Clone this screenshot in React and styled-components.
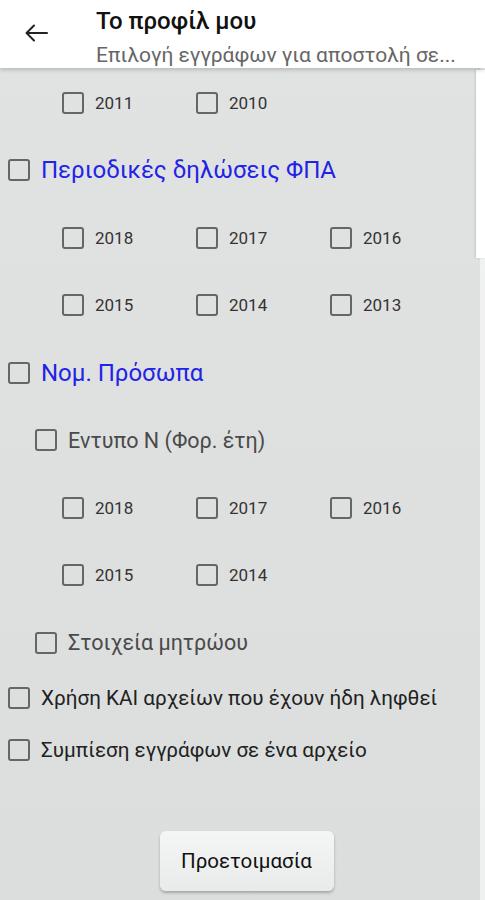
import React from "react";
import styled, { createGlobalStyle } from "styled-components";

const GlobalStyle = createGlobalStyle`
  body {
    margin: 0;
    font-family: Roboto, "Noto Sans", sans-serif;
    background: #e0e2e2;
  }
`;

const sections = [
  { type: "years", years: ["2011", "2010"] },
  { type: "group", label: "Περιοδικές δηλώσεις ΦΠΑ" },
  { type: "years", years: ["2018", "2017", "2016"] },
  { type: "years", years: ["2015", "2014", "2013"] },
  { type: "group", label: "Νομ. Πρόσωπα" },
  { type: "sub", label: "Εντυπο Ν (Φορ. έτη)" },
  { type: "years", years: ["2018", "2017", "2016"] },
  { type: "years", years: ["2015", "2014"] },
  { type: "sub", label: "Στοιχεία μητρώου" },
];

const options = [
  "Χρήση ΚΑΙ αρχείων που έχουν ήδη ληφθεί",
  "Συμπίεση εγγράφων σε ένα αρχείο",
];

/* =========================
   Styled Components
========================= */

const Page = styled.div`
  position: relative;
  height: 900px;
  overflow: hidden;
  background: linear-gradient(#e1e3e3, #dcdede);
`;

const Header = styled.header`
  position: relative;
  z-index: 2;
  height: 68px;
  display: flex;
  background: #ffffff;
  box-shadow: 0 2px 4px rgba(0, 0, 0, 0.18);
`;

const BackButton = styled.div`
  width: 72px;
  display: flex;
  align-items: center;
  justify-content: center;
  color: #222;
  padding-bottom: 2px;
`;

const Titles = styled.div`
  margin-left: 24px;
  padding-top: 6px;
  display: flex;
  flex-direction: column;
  min-width: 0;
`;

const Title = styled.div`
  font-size: 24px;
  line-height: 30px;
  font-weight: 500;
  color: #111;
`;

const Subtitle = styled.div`
  margin-top: 7px;
  font-size: 21px;
  line-height: 24px;
  color: #666;
  white-space: nowrap;
`;

const Content = styled.div`
  padding: 1px 0 0 8px;
`;

const Row = styled.div`
  height: 67.5px;
  display: flex;
  align-items: center;
  padding-left: ${(p) => p.$indent || 0}px;
`;

const Item = styled.label`
  display: flex;
  align-items: center;
  width: ${(p) => (p.$width ? `${p.$width}px` : "auto")};
`;

const Box = styled.span`
  box-sizing: border-box;
  width: 22px;
  height: 22px;
  flex: none;
  border: 2px solid #666;
  border-radius: 3px;
  margin-right: 11px;
`;

const YearText = styled.span`
  font-size: 17px;
  color: #333;
`;

const GroupText = styled.span`
  font-size: 24px;
  color: #2323e6;
`;

const SubText = styled.span`
  font-size: 21.5px;
  color: #4a4a4a;
`;

const Options = styled.div`
  margin-top: -5px;
`;

const OptionRow = styled.label`
  height: 52px;
  display: flex;
  align-items: center;
`;

const OptionText = styled.span`
  font-size: 20.7px;
  color: #222;
`;

const Footer = styled.div`
  display: flex;
  justify-content: center;
  margin-top: 55px;
`;

const Button = styled.button`
  width: 174px;
  height: 60px;
  border: none;
  border-radius: 6px;
  background: linear-gradient(#f4f6f6, #e9ebeb);
  box-shadow: 0 2px 3px rgba(0, 0, 0, 0.25);
  font-family: Roboto, sans-serif;
  font-size: 20.5px;
  color: #111;
`;

const ScrollTrack = styled.div`
  position: absolute;
  top: 68px;
  right: 0;
  bottom: 0;
  width: 5px;
  background: rgba(255, 255, 255, 0.55);
`;

const ScrollThumb = styled.div`
  position: absolute;
  top: 70px;
  right: 0;
  width: 9px;
  height: 188px;
  background: #ffffff;
  box-shadow: -1px 0 2px rgba(0, 0, 0, 0.12);
`;

const BackArrow = () => (
  <svg width="24" height="20" viewBox="0 0 24 20" fill="none">
    <path
      d="M23 10H2.5M10 2.5L2.5 10L10 17.5"
      stroke="currentColor"
      strokeWidth="2"
      strokeLinecap="round"
      strokeLinejoin="round"
    />
  </svg>
);

/* =========================
   Component
========================= */

const App = () => {
  return (
    <Page>
      <GlobalStyle />
      <Header>
        <BackButton>
          <BackArrow />
        </BackButton>
        <Titles>
          <Title>Το προφίλ μου</Title>
          <Subtitle>Επιλογή εγγράφων για αποστολή σε...</Subtitle>
        </Titles>
      </Header>

      <Content>
        {sections.map((s, i) => {
          if (s.type === "years") {
            return (
              <Row key={i} $indent={54}>
                {s.years.map((y) => (
                  <Item key={y} $width={134}>
                    <Box />
                    <YearText>{y}</YearText>
                  </Item>
                ))}
              </Row>
            );
          }
          if (s.type === "group") {
            return (
              <Row key={i}>
                <Item>
                  <Box />
                  <GroupText>{s.label}</GroupText>
                </Item>
              </Row>
            );
          }
          return (
            <Row key={i} $indent={27}>
              <Item>
                <Box />
                <SubText>{s.label}</SubText>
              </Item>
            </Row>
          );
        })}

        <Options>
          {options.map((o) => (
            <OptionRow key={o}>
              <Box />
              <OptionText>{o}</OptionText>
            </OptionRow>
          ))}
        </Options>

        <Footer>
          <Button>Προετοιμασία</Button>
        </Footer>
      </Content>

      <ScrollTrack />
      <ScrollThumb />
    </Page>
  );
};

export default App;
